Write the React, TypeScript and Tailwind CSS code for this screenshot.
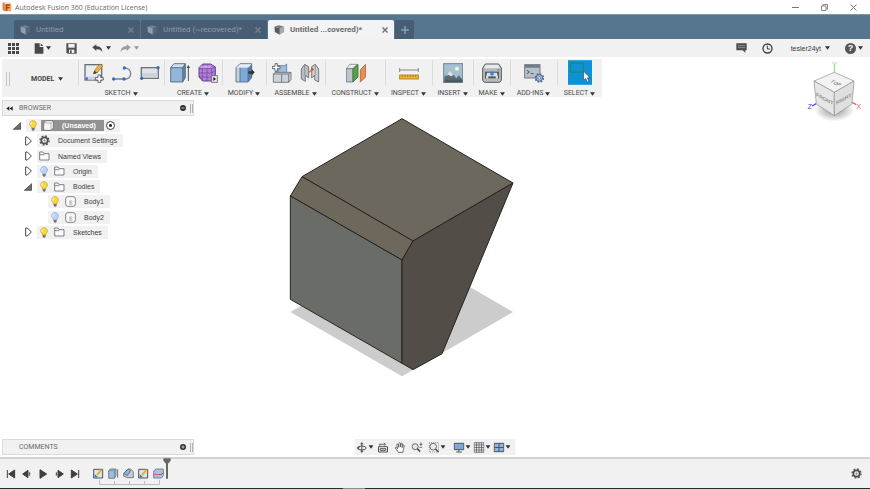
import { useState } from 'react';
import type { ReactNode } from 'react';
import clsx from 'clsx';

type IconProps = { className?: string };

const Caret = ({ className = 'text-[#333333]' }: IconProps) => (
  <svg viewBox="0 0 5 4" className={clsx('h-1 w-[5px] shrink-0', className)} aria-hidden="true">
    <path d="M0 0.2h5L2.500 3.800z" fill="currentColor" />
  </svg>
);

/* ---------- logos and tab icons ---------- */

const Logo = () => (
  <svg viewBox="0 0 30 30" className="size-[10px] shrink-0" aria-hidden="true">
    <path d="M2 2h20l6 5v21H8l-6-5z" fill="#f3a766" />
    <path d="M2 2h6v26l-6-5z" fill="#d98546" />
    <path d="M8 2h20v4H8z" fill="#fbd9b8" />
    <path d="M11 7h13v4h-8v4h7v4h-7v7h-5z" fill="#9c4a18" />
  </svg>
);

const CubeIcon = ({ dim }: { dim?: boolean }) => (
  <svg viewBox="0 0 32 30" className={clsx('h-[10px] w-[11px] shrink-0', dim && 'opacity-60')} aria-hidden="true">
    <path d="M1 5 14 1l16 4-13 5z" fill={dim ? '#8b98a4' : '#777777'} />
    <path d="M1 5l16 5v19L2 21z" fill={dim ? '#c3ccd4' : '#5a5a5a'} />
    <path d="M17 10 30 5v16l-13 8z" fill={dim ? '#5f6f7f' : '#a9a9a9'} />
  </svg>
);

/* ---------- quick access icons ---------- */

const GridIcon = () => (
  <svg viewBox="0 0 33 33" className="size-[11px]" fill="#484848" aria-hidden="true">
    {[0, 12, 24].map((y) => [0, 12, 24].map((x) => <rect key={`${x}-${y}`} x={x} y={y} width="9" height="9" />))}
  </svg>
);

const FileIcon = () => (
  <svg viewBox="0 0 30 33" className="h-[11px] w-[10px]" fill="#484848" aria-hidden="true">
    <path d="M2 1h15v11h11v20H2z" />
    <path d="M20 1l8 8h-8z" />
  </svg>
);

const SaveIcon = () => (
  <svg viewBox="0 0 33 33" className="size-[11px]" aria-hidden="true">
    <path d="M1 1h31v31H5l-4-4z" fill="#505050" />
    <path d="M7 3h19v11H7z" fill="#f2f2f2" />
    <path d="M9 20h16v10H9z" fill="#f2f2f2" />
    <path d="M12 22h5v8h-5z" fill="#505050" />
  </svg>
);

const UndoIcon = ({ flip }: { flip?: boolean }) => (
  <svg viewBox="0 0 33 27" className="h-[9px] w-[11px]" aria-hidden="true">
    <path
      d={flip ? 'M32 10 20 1v6C9 7 2 13 2 24c4-7 9-9 18-8v5z' : 'M1 10 13 1v6c11 0 18 6 18 17-4-7-9-9-18-8v5z'}
      fill={flip ? '#9a9a9a' : '#484848'}
    />
  </svg>
);

const ChatIcon = () => (
  <svg viewBox="0 0 33 30" className="h-[10px] w-[11px]" aria-hidden="true">
    <path d="M1 1h31v21h-4v7l-8-7H1z" fill="#4c4c4c" />
    <path d="M6 8h21M6 14h21" stroke="#b5b5b5" strokeWidth="2" />
  </svg>
);

const ClockIcon = () => (
  <svg viewBox="0 0 33 33" className="size-[11px]" fill="none" stroke="#3d3d3d" strokeWidth="4" aria-hidden="true">
    <circle cx="16.500" cy="16.500" r="13.500" />
    <path d="M16 8v10h8" strokeWidth="3" />
  </svg>
);

/* ---------- ribbon icons, drawn on a 60 grid ---------- */

const Big = ({ children }: { children: ReactNode }) => (
  <svg viewBox="0 0 60 60" className="size-5 shrink-0" aria-hidden="true">
    {children}
  </svg>
);

const SketchIcon = () => (
  <Big>
    <rect x="3" y="5" width="50" height="46" fill="#e9edf2" stroke="#6a6f76" strokeWidth="4" />
    <path d="M5 40h36v10H5z" fill="#cfd6df" />
    <circle cx="8" cy="47" r="4" fill="#3f6fd0" />
    <path d="M28 33l4-11L48 3l8 6-16 20z" fill="#f0b43c" stroke="#8b6420" strokeWidth="2" />
    <path d="M28 33l4-10 7 6z" fill="#4a3a28" />
    <path d="M42 36h8v8h8v7h-8v8h-8v-8h-8v-7h8z" fill="#fff" stroke="#4a4a4a" strokeWidth="2.500" />
  </Big>
);

const ArcIcon = () => (
  <Big>
    <path d="M4 48h32c12 0 20-6 20-16S48 15 37 15" fill="none" stroke="#7b8084" strokeWidth="4" />
    <g fill="#3468cf">
      <circle cx="5" cy="48" r="5" />
      <circle cx="36" cy="48" r="5" />
      <circle cx="37" cy="15" r="5" />
    </g>
  </Big>
);

const RectIcon = () => (
  <Big>
    <rect x="4" y="14" width="51" height="32" fill="#dfe3e7" stroke="#6e7276" strokeWidth="4" />
    <path d="M6 30h47v14H6z" fill="#cdd2d7" />
    <circle cx="54" cy="14" r="5" fill="#3468cf" />
    <circle cx="5" cy="46" r="5" fill="#3468cf" />
  </Big>
);

const ExtrudeIcon = () => (
  <Big>
    <path d="M2 14 12 2h34l-8 12z" fill="#cfe0ee" />
    <path d="M38 14l8-12v42l-8 13z" fill="#5f86ae" />
    <path d="M2 14h36v43H2z" fill="#91b6d8" />
    <path d="M2 14 12 2h34v42l-8 13H2zM2 14h36v43M38 14l8-12" fill="none" stroke="#4d6075" strokeWidth="2.500" />
    <path d="M55 12v42" stroke="#555" strokeWidth="3" />
    <path d="M55 6l5 9H50z" fill="#444" />
  </Big>
);

const FormIcon = () => (
  <Big>
    <path d="M14 3h24l14 9v28L40 54H14L3 42V14z" fill="#b07fd8" stroke="#67408c" strokeWidth="3" />
    <path d="M3 17h38l11-5M3 30h38l11-7M3 42h38l11-8M16 3l-3 14v37M30 3l-3 14v37M41 17v37" fill="none" stroke="#70449c" strokeWidth="2" />
    <path d="M9 8h30l-4 7H7z" fill="#d3b5ea" opacity=".7" />
    <rect x="41" y="38" width="17" height="20" fill="#eee" stroke="#777" strokeWidth="3" />
    <path d="M46 42l8 6-8 6z" fill="#222" />
  </Big>
);

const PressPullIcon = () => (
  <Big>
    <path d="M3 14 15 2h35L38 14z" fill="#e7edf2" />
    <path d="M3 14h12v43H3z" fill="#c3d3e0" />
    <path d="M15 14h24v43H15z" fill="#7ca9d5" />
    <path d="M39 14 51 3v40L39 57z" fill="#5682b5" />
    <path d="M3 14 15 2h35v42L39 57H3zM15 14v43M39 14v43" fill="none" stroke="#536a82" strokeWidth="2.500" />
    <path d="M40 25h10v-6l9 9-9 10v-6H40z" fill="#333" />
  </Big>
);

const ComponentIcon = () => (
  <Big>
    <path d="M18 8h20l6-5v26H18z" fill="#9dbde0" stroke="#5b7ba1" strokeWidth="2.500" />
    <path d="M4 33l5-5h48v22l-7 8H4z" fill="#ccd2d8" stroke="#666d76" strokeWidth="2.500" />
    <path d="M4 33h46l7-5M29 33v25M50 33v25" fill="none" stroke="#666d76" strokeWidth="2.500" />
    <path d="M9 2h7v8h8v7h-8v8H9v-8H1v-7h8z" fill="#fff" stroke="#4c4c4c" strokeWidth="2.500" />
  </Big>
);

const JointIcon = () => (
  <Big>
    <path d="M4 18 14 4l12 7v34l-10-8v18L4 48z" fill="#b9bec4" stroke="#62676c" strokeWidth="2.500" />
    <path d="M56 18 46 4l-11 7v34l9-8v14l12 6z" fill="#c9cdd1" stroke="#62676c" strokeWidth="2.500" />
    <path d="M14 4v33M46 4v33" stroke="#7c8186" strokeWidth="2" />
    <path d="M25 30 37 19" stroke="#e2762c" strokeWidth="4" />
    <circle cx="37" cy="19" r="4" fill="#d8571c" />
  </Big>
);

const PlaneIcon = () => (
  <Big>
    <path d="M1 17 11 4h22L21 17z" fill="#e9edf0" stroke="#70777d" strokeWidth="2" />
    <path d="M1 17h20v40H1z" fill="#bcc5cc" stroke="#70777d" strokeWidth="2.500" />
    <path d="M21 17 36 4v38L21 57z" fill="#58a04e" stroke="#37742f" strokeWidth="2.500" />
    <path d="M43 20 59 4v38L43 57z" fill="#e58e58" stroke="#b1602f" strokeWidth="2.500" />
  </Big>
);

const MeasureIcon = () => (
  <Big>
    <path d="M2 21h56M2 15v12M58 15v12" stroke="#888" strokeWidth="3" />
    <rect x="2" y="36" width="56" height="12" fill="#f0b52c" stroke="#a67c1c" strokeWidth="2.500" />
    <path d="M10 37v5M18 37v5M26 37v5M34 37v5M42 37v5M50 37v5" stroke="#8a681a" strokeWidth="2" />
  </Big>
);

const ImageIcon = () => (
  <Big>
    <rect x="2" y="2" width="57" height="57" fill="#a5c0d6" stroke="#78828a" strokeWidth="3" />
    <circle cx="42" cy="17" r="6" fill="#fdf3bb" />
    <path d="M4 42 21 22l19 24 7-9 11 12v9H4z" fill="#5d6c79" />
    <path d="M21 22l11 14-9 4-7-5-8 4z" fill="#dbe3e8" />
    <path d="M4 50h54v8H4z" fill="#4b5966" />
  </Big>
);

const PrintIcon = () => (
  <Big>
    <path d="M10 3h40l8 12v37l-5 6H7l-5-6V15z" fill="#b6babd" stroke="#55595d" strokeWidth="3" />
    <path d="M11 5h38l5 11H6z" fill="#e8eaeb" />
    <circle cx="49" cy="20" r="3" fill="#3fae3a" />
    <rect x="9" y="26" width="42" height="22" fill="#50555a" />
    <path d="M15 29h30l4 18H11z" fill="#dcdfe1" />
    <path d="M19 40h22v6H19z" fill="#50555a" />
    <path d="M25 26h10v8l-5 5-5-5z" fill="#3b82d4" />
  </Big>
);

const ScriptIcon = () => (
  <Big>
    <rect x="2" y="5" width="46" height="40" fill="#b7c0ca" stroke="#727a83" strokeWidth="3" />
    <path d="M3 6h44v8H3z" fill="#707a86" />
    <path d="M9 22l7 5-7 5M20 32h9" fill="none" stroke="#4e5660" strokeWidth="3" />
    <circle cx="46" cy="45" r="10" fill="#a8bedb" stroke="#4b6b94" strokeWidth="3" />
    <circle cx="46" cy="45" r="12" fill="none" stroke="#4b6b94" strokeWidth="5" strokeDasharray="5 4.400" />
    <circle cx="46" cy="45" r="4" fill="#f0f0f0" stroke="#4b6b94" strokeWidth="2" />
  </Big>
);

const SelectIcon = () => (
  <svg viewBox="0 0 72 74" className="h-[25px] w-6 shrink-0" aria-hidden="true">
    <rect width="72" height="74" fill="#0d92d8" />
    <rect x="8" y="9" width="38" height="27" fill="none" stroke="#1e8a4c" strokeWidth="3" />
    <path d="M47 33v27l6-5 5 11 5-3-5-10h8z" fill="#fff" stroke="#3a4752" strokeWidth="2" />
  </svg>
);

const ribbon = [
  { label: 'SKETCH', width: 'w-[86px]', icons: [SketchIcon, ArcIcon, RectIcon] },
  { label: 'CREATE', width: 'w-[58px]', icons: [ExtrudeIcon, FormIcon] },
  { label: 'MODIFY', width: 'w-11', icons: [PressPullIcon] },
  { label: 'ASSEMBLE', width: 'w-[59px]', icons: [ComponentIcon, JointIcon] },
  { label: 'CONSTRUCT', width: 'w-[60px]', icons: [PlaneIcon] },
  { label: 'INSPECT', width: 'w-[47px]', icons: [MeasureIcon] },
  { label: 'INSERT', width: 'w-[41px]', icons: [ImageIcon] },
  { label: 'MAKE', width: 'w-[37px]', icons: [PrintIcon] },
  { label: 'ADD-INS', width: 'w-[47px]', icons: [ScriptIcon] },
  { label: 'SELECT', width: 'w-[45px]', icons: [SelectIcon] },
];

/* ---------- browser tree icons ---------- */

const Bulb = ({ on }: { on: boolean }) => (
  <svg viewBox="0 0 30 33" className="h-[11px] w-[10px] shrink-0" aria-hidden="true">
    <path
      d="M15 2c6 0 10 4 10 10 0 5-5 7-5 12h-9c0-5-6-7-6-12C5 6 9 2 15 2z"
      fill={on ? '#f8d93c' : '#bcd3f3'}
      stroke={on ? '#c39a1d' : '#7f9cc6'}
      strokeWidth="2"
    />
    <path d="M11 6c-3 2-3 5-2 8" fill="none" stroke="#fff" strokeWidth="3" />
    <path d="M11 24h9v5l-3 3h-3l-3-3z" fill="#777" />
  </svg>
);

const Folder = () => (
  <svg viewBox="0 0 33 30" className="h-[10px] w-[11px] shrink-0" fill="#fafafa" stroke="#666b70" strokeWidth="2.500" aria-hidden="true">
    <path d="M2 3h10l3 5h15v19H2z" />
    <path d="M2 11h12l3-3" fill="none" />
  </svg>
);

const Gear = ({ className }: IconProps) => (
  <svg viewBox="0 0 33 33" className={clsx('shrink-0', className)} fill="none" stroke="#505050" aria-hidden="true">
    <circle cx="16.500" cy="16.500" r="9.500" strokeWidth="5" />
    <circle cx="16.500" cy="16.500" r="13.500" strokeWidth="4" strokeDasharray="5.300 5.300" />
    <circle cx="16.500" cy="16.500" r="2" strokeWidth="2" />
  </svg>
);

const BodyIcon = () => (
  <svg viewBox="0 0 33 33" className="size-[11px] shrink-0" aria-hidden="true">
    <rect x="2" y="2" width="29" height="29" rx="7" fill="#fbfbfb" stroke="#6a6f76" strokeWidth="2.500" />
    <path d="M12 13h10v14H12z" fill="#c6cdd6" />
  </svg>
);

const PartIcon = () => (
  <svg viewBox="0 0 33 33" className="size-[11px] shrink-0" aria-hidden="true">
    <path d="M2 9l7-7h22v22l-7 7H2z" fill="#f5f5f5" stroke="#5e5e5e" strokeWidth="2" />
    <path d="M2 9h22v22M24 9l7-7" fill="none" stroke="#9a9a9a" strokeWidth="2" />
  </svg>
);

const Arrow = ({ open }: { open: boolean }) => (
  <svg viewBox="0 0 24 30" className="h-[10px] w-2" aria-hidden="true">
    {open ? (
      <path d="M23 5v20H1z" fill="#6f6f6f" stroke="#333" strokeWidth="2" />
    ) : (
      <path d="M5 3h5l12 12-12 12H5z" fill="#fff" stroke="#444" strokeWidth="3" />
    )}
  </svg>
);

type Node = { name: string; pad: string; open?: boolean; bulb?: boolean; icon: () => ReactNode };

const nodes: Node[] = [
  { name: 'Document Settings', pad: 'pl-[22px]', open: false, icon: () => <Gear className="size-[11px]" /> },
  { name: 'Named Views', pad: 'pl-[22px]', open: false, icon: Folder },
  { name: 'Origin', pad: 'pl-[22px]', open: false, bulb: false, icon: Folder },
  { name: 'Bodies', pad: 'pl-[22px]', open: true, bulb: true, icon: Folder },
  { name: 'Body1', pad: 'pl-[46px]', bulb: true, icon: BodyIcon },
  { name: 'Body2', pad: 'pl-[46px]', bulb: false, icon: BodyIcon },
  { name: 'Sketches', pad: 'pl-[22px]', open: false, bulb: true, icon: Folder },
];

function TreeRow({ node }: { node: Node }) {
  const [lit, setLit] = useState(node.bulb);
  const Icon = node.icon;
  return (
    <li className={clsx('flex h-[13px] items-center gap-[5px]', node.pad)}>
      {node.open !== undefined && (
        <button aria-label={`Toggle ${node.name}`}>
          <Arrow open={node.open} />
        </button>
      )}
      <div className="flex h-[13px] items-center bg-[#f1f1f1] pr-[6px] pl-[2px]">
        {lit !== undefined && (
          <button aria-label={`Show or hide ${node.name}`} className="mr-[5px]" onClick={() => setLit(!lit)}>
            <Bulb on={lit} />
          </button>
        )}
        <button className="flex items-center gap-2">
          <Icon />
          {node.name}
        </button>
      </div>
    </li>
  );
}

function PanelHeader({ title, arrows, plus }: { title: string; arrows?: boolean; plus?: boolean }) {
  return (
    <div className="flex h-4 w-48 items-center border border-[#dadada] bg-[#f1f1f1] pl-[3px] font-[Roboto,sans-serif] text-[7px] text-[#6b6b6b]">
      <span className="w-[13px]">
        {arrows && (
          <svg viewBox="0 0 21 15" className="h-[5px] w-[7px]" fill="#222" aria-hidden="true">
            <path d="M10 1v13L1 7.500zM20 1v13l-9-6.500z" />
          </svg>
        )}
      </span>
      <h2>{title}</h2>
      <button aria-label={`${title} options`} className="ml-auto">
        <svg viewBox="0 0 18 18" className="size-[6px]" aria-hidden="true">
          <circle cx="9" cy="9" r="9" fill="#2e2e2e" />
          <path d={plus ? 'M4 9h10M9 4v10' : 'M4 9h10'} stroke="#d8d8d8" strokeWidth="2.500" />
        </svg>
      </button>
      <span className="ml-1 h-[9px] w-[3px] border-x border-[#b3b3b3]" />
    </div>
  );
}

/* ---------- navigation bar icons, drawn on a 33 grid ---------- */

const Small = ({ children }: { children: ReactNode }) => (
  <svg viewBox="0 0 33 33" className="size-[11px] shrink-0" fill="none" stroke="#4f5357" strokeWidth="3" aria-hidden="true">
    {children}
  </svg>
);

const navTools = [
  {
    name: 'Orbit',
    menu: true,
    gap: 'ml-0',
    icon: (
      <Small>
        <ellipse cx="16" cy="18" rx="13" ry="6" />
        <path d="M16 4v26" />
        <path d="M16 0l5 7H11zM16 33l5-7H11zM1 15l9 1-5 7z" fill="#4f5357" stroke="none" />
      </Small>
    ),
  },
  {
    name: 'Look at',
    gap: 'ml-1',
    icon: (
      <Small>
        <path d="M3 14h27v16H3zM8 20h17v5H8z" />
        <path d="M7 14V5M7 7h15M19 3l5 4-5 4" strokeWidth="2.500" />
      </Small>
    ),
  },
  {
    name: 'Pan',
    gap: 'ml-[6px]',
    icon: (
      <Small>
        <path
          d="M12 31C9 26 4 22 2 17c2-2 4 0 7 3L7 8c1-3 4-2 4 0l2 8V4c1-3 4-3 5 0v11l2-10c1-2 4-2 4 1l-1 11 3-7c2-2 4 0 3 2-1 8-3 12-4 19z"
          fill="#fff"
          strokeWidth="2.500"
        />
      </Small>
    ),
  },
  {
    name: 'Zoom',
    gap: 'ml-[6px]',
    icon: (
      <Small>
        <circle cx="11" cy="14" r="9" fill="#dceaf2" strokeWidth="2.500" />
        <path d="M17 20l9 9" strokeWidth="5" />
        <path d="M24 7h9M28.500 2v10M24 16h8" strokeWidth="2.500" />
      </Small>
    ),
  },
  {
    name: 'Fit',
    menu: true,
    gap: 'ml-[6px]',
    icon: (
      <Small>
        <path d="M2 2h28v28H2z" strokeDasharray="3 3" strokeWidth="2" />
        <circle cx="14" cy="14" r="10" fill="#e2eff4" strokeWidth="2.500" />
        <path d="M21 21l9 9" strokeWidth="5" />
      </Small>
    ),
  },
  {
    name: 'Display settings',
    menu: true,
    gap: 'ml-2',
    icon: (
      <Small>
        <path d="M2 4h29v19H2z" fill="#7fa9dc" />
        <path d="M16 23v6M8 30h17" />
      </Small>
    ),
  },
  {
    name: 'Grid and snaps',
    menu: true,
    gap: 'ml-[3px]',
    icon: (
      <Small>
        <path d="M2 2h29v29H2z" fill="#e4e4e4" strokeWidth="2" />
        <path d="M9 2v29M16.500 2v29M24 2v29M2 9h29M2 16.500h29M2 24h29" strokeWidth="2" />
      </Small>
    ),
  },
  {
    name: 'Viewports',
    menu: true,
    gap: 'ml-[3px]',
    icon: (
      <Small>
        <path d="M2 4h29v25H2z" fill="#8db4e2" />
        <path d="M16.500 4v25M2 16.500h29" />
      </Small>
    ),
  },
];

const playback = [
  { name: 'Go to start', d: 'M4 3v24M26 3v24L8 15z' },
  { name: 'Step back', d: 'M18 4v22L2 15zM23 10v10' },
  { name: 'Play', d: 'M6 2l20 13L6 28z' },
  { name: 'Step forward', d: 'M12 4v22l16-11zM7 10v10' },
  { name: 'Go to end', d: 'M26 3v24M4 3v24l18-12z' },
];

const sketchFeature = (
  <Small>
    <path d="M2 4h27v26H2z" fill="#dde5ec" />
    <path d="M12 21 26 5" stroke="#e9b021" strokeWidth="6" />
    <path d="M5 19v9h10z" fill="#2f6dc0" stroke="none" />
  </Small>
);

const features = [
  { name: 'Sketch1', icon: sketchFeature },
  {
    name: 'Extrude1',
    icon: (
      <Small>
        <path d="M2 8l5-5h17v20l-5 8H2z" fill="#9dbfe0" strokeWidth="2" />
        <path d="M2 8h17v22M19 8l5-5" stroke="#5f7d9c" strokeWidth="2" />
        <path d="M29 4v25" strokeWidth="2.500" />
      </Small>
    ),
  },
  {
    name: 'Chamfer1',
    icon: (
      <Small>
        <path d="M2 17 15 3h8l8 8v18H14L2 25z" fill="#c6cfd8" strokeWidth="2" />
        <path d="M2 17 15 3l8 5-10 15z" fill="#8fb4dd" strokeWidth="2" />
      </Small>
    ),
  },
  { name: 'Sketch2', icon: sketchFeature },
  {
    name: 'Split1',
    icon: (
      <Small>
        <path d="M2 9l7-6h22v20l-6 7H2z" fill="#a9c3de" stroke="#60758c" strokeWidth="2.500" />
        <path d="M2 22c8-8 14 4 29-7" stroke="#d84436" />
      </Small>
    ),
  },
];

function Model() {
  return (
    <svg viewBox="0 0 735 825" className="absolute top-[53px] left-[280px] h-[275px] w-[245px]" role="img" aria-label="Solid body">
      <path d="M366 413 699 606 366 799 31 606z" fill="#cccccc" />
      <g stroke="#25231f" strokeWidth="3" strokeLinejoin="round">
        <path d="M366 26 699 219 399 393 66 200z" fill="#6c685e" />
        <path d="M66 200 399 393 366 450 31 258z" fill="#6d675c" />
        <path d="M31 258 366 450v310L31 568z" fill="#6a6c67" />
        <path d="M399 393 699 219 486 731l-87 48-33-19V450z" fill="#524e47" />
      </g>
    </svg>
  );
}

function ViewCube() {
  return (
    <svg viewBox="318 180 168 189" className="absolute top-[3px] right-2 h-[63px] w-14 font-['Liberation_Sans',sans-serif]" role="img" aria-label="View cube">
      <defs>
        <radialGradient id="floor">
          <stop offset="0.3" stopColor="#b0b0b0" />
          <stop offset="1" stopColor="#b0b0b0" stopOpacity="0" />
        </radialGradient>
      </defs>
      <ellipse cx="403" cy="330" rx="60" ry="34" fill="url(#floor)" />
      <path d="M403 217v-20" stroke="#72e672" strokeWidth="3" />
      <path d="M349 311l-13 7" stroke="#4a4aee" strokeWidth="4" />
      <path d="M456 307l13 7" stroke="#f06060" strokeWidth="4" />
      <g stroke="#8d8d8d" strokeWidth="2" strokeLinejoin="round">
        <path d="M403 217 462 243 403 277 342 243z" fill="#f3f3f3" />
        <path d="M342 243 403 277v70l-54-35z" fill="#e6e6e6" />
        <path d="M403 277 462 243l-6 69-53 35z" fill="#dfdfdf" />
      </g>
      <g fill="#8e8e8e" fontSize="15" fontWeight="bold" textAnchor="middle">
        <text transform="translate(403 253) rotate(26) skewX(-25)">TOP</text>
        <text transform="translate(374 302) skewY(28)">FRONT</text>
        <text transform="translate(431 302) skewY(-28)">RIGHT</text>
      </g>
      <g fontSize="22" textAnchor="middle">
        <text x="403" y="202" fill="#72e672">Y</text>
        <text x="329" y="328" fill="#4a4aee">Z</text>
        <text x="476" y="327" fill="#f06060">X</text>
      </g>
    </svg>
  );
}

const tabs = ['Untitled', 'Untitled (~recovered)*', 'Untitled ...covered)*'];

export default function App() {
  const [active, setActive] = useState(2);

  return (
    <div className="flex h-screen flex-col overflow-hidden bg-white font-['Liberation_Sans',sans-serif] text-[7px] leading-none text-[#3c3c3c]">
      {/* Title bar */}
      <header className="flex h-[14px] shrink-0 items-center gap-[3px] pr-[13px] pl-[2px]">
        <Logo />
        <h1 className="font-['Open_Sans',sans-serif] text-[7px] text-[#6a6a6a]">Autodesk Fusion 360 (Education License)</h1>
        <div className="ml-auto flex gap-[22px]">
          <button aria-label="Minimize">
            <svg viewBox="0 0 7 7" className="size-[7px]" stroke="#777" fill="none"><path d="M0 3.500h7" /></svg>
          </button>
          <button aria-label="Restore">
            <svg viewBox="0 0 7 7" className="size-[7px]" stroke="#888" fill="none"><path d="M.5 2h4.500v4.500H.5zM2 2V.5h4.500V5H5" /></svg>
          </button>
          <button aria-label="Close">
            <svg viewBox="0 0 7 7" className="size-[7px]" stroke="#777" fill="none"><path d="M.5.5l6 6M6.500.5l-6 6" /></svg>
          </button>
        </div>
      </header>

      {/* Document tabs */}
      <div className="flex h-[25px] shrink-0 items-end gap-px border-t border-[#7f97aa] bg-[#56758f] pl-[14px]" role="tablist">
        {tabs.map((name, i) => (
          <div
            key={name}
            className={clsx(
              'flex h-[19px] w-[126px] items-center rounded-t-xs pr-[6px] pl-[6px]',
              i === active ? 'bg-[#f3f3f5] font-bold text-[#6b6b6b]' : 'bg-[#475d74] text-[#8d9cab]'
            )}
          >
            <button
              role="tab"
              aria-selected={i === active}
              onClick={() => setActive(i)}
              className="flex grow items-center gap-[5px] font-[Roboto,sans-serif] text-[8px]"
            >
              <CubeIcon dim={i !== active} />
              {name}
            </button>
            <button aria-label={`Close ${name}`}>
              <svg viewBox="0 0 6 6" className="size-[6px]" stroke={i === active ? '#777777' : '#74808d'} strokeWidth="1.500">
                <path d="M.5.5l5 5M5.500.5l-5 5" />
              </svg>
            </button>
          </div>
        ))}
        <button aria-label="New tab" className="flex h-[19px] w-[19px] items-center justify-center rounded-t-xs bg-[#475d74]">
          <svg viewBox="0 0 8 8" className="size-2" stroke="#8f9dab" strokeWidth="1.500"><path d="M4 0v8M0 4h8" /></svg>
        </button>
      </div>

      {/* Quick access bar */}
      <div className="flex h-[18px] shrink-0 items-center bg-[#f1f1f1] pr-[7px] pl-2">
        <button aria-label="Data panel"><GridIcon /></button>
        <button aria-label="File" className="ml-[15px] flex items-center gap-[2px]"><FileIcon /><Caret /></button>
        <button aria-label="Save" className="ml-[15px]"><SaveIcon /></button>
        <button aria-label="Undo" className="ml-[15px] flex items-center gap-[3px]"><UndoIcon /><Caret /></button>
        <button aria-label="Redo" className="ml-[9px] flex items-center gap-[3px]"><UndoIcon flip /><Caret className="text-[#999999]" /></button>
        <button aria-label="Comments" className="ml-auto"><ChatIcon /></button>
        <button aria-label="Job status" className="ml-[15px]"><ClockIcon /></button>
        <button className="ml-[18px] flex items-center gap-1">tesler24yt<Caret /></button>
        <button aria-label="Help" className="ml-[15px] flex items-center gap-[2px]">
          <span className="flex size-[11px] items-center justify-center rounded-full bg-[#555555] text-[9px] font-bold text-white">?</span>
          <Caret />
        </button>
      </div>

      <main className="relative grow">
        <Model />
        <ViewCube />

        <div className="absolute top-[2px] left-[2px] flex flex-col gap-[3px]">
          {/* Ribbon */}
          <nav className="flex h-[38px] bg-[#f1f1f1] font-[Roboto,sans-serif]">
            <div className="flex w-[76px] items-center pt-[2px] pl-1">
              <span className="h-[14px] w-1 border-x border-[#c4c4c4]" />
              <button className="ml-[21px] flex items-center gap-1 font-bold text-[#444444]">
                MODEL
                <Caret />
              </button>
            </div>
            {ribbon.map(({ label, width, icons }) => (
              <div key={label} className={clsx('flex shrink-0 flex-col items-center justify-between pt-px', width)}>
                <div className="flex h-[25px] w-full items-center justify-center gap-2 border-l border-[#dcdcdc]">
                  {icons.map((Icon, i) => (
                    <button key={i} aria-label={`${label} tool ${i + 1}`}>
                      <Icon />
                    </button>
                  ))}
                </div>
                <button className="flex items-center gap-[2px] text-[#4a4a4a]">
                  {label}
                  <Caret />
                </button>
              </div>
            ))}
          </nav>

          {/* Browser */}
          <aside className="flex flex-col gap-[3px]">
            <PanelHeader title="BROWSER" arrows />
            <ul className="flex h-[120px] flex-col justify-between">
              <li className="flex h-[13px] items-center gap-[5px] pl-[11px]">
                <button aria-label="Toggle root"><Arrow open /></button>
                <div className="flex h-[13px] items-center bg-[#f1f1f1] pr-[5px] pl-[2px]">
                  <Bulb on />
                  <button className="ml-[3px] flex h-[11px] items-center gap-2 bg-[#929292] pr-2 pl-[2px] font-bold text-white">
                    <PartIcon />
                    (Unsaved)
                  </button>
                  <input
                    type="radio"
                    defaultChecked
                    aria-label="Activate component"
                    className="ml-[2px] size-[9px] appearance-none rounded-full border border-[#444444] bg-[radial-gradient(circle,#333333_25%,#ffffff_35%)]"
                  />
                </div>
              </li>
              {nodes.map((node) => (
                <TreeRow key={node.name} node={node} />
              ))}
            </ul>
          </aside>
        </div>

        <div className="absolute bottom-[2px] left-[2px]">
          <PanelHeader title="COMMENTS" plus />
        </div>

        {/* Navigation bar */}
        <div className="absolute bottom-[2px] left-1/2 flex h-4 w-[161px] -translate-x-1/2 items-center bg-[#f1f1f1] px-[2px]">
          {navTools.map(({ name, menu, gap, icon }) => (
            <button key={name} aria-label={name} className={clsx('flex items-center gap-px', gap)}>
              {icon}
              {menu && <Caret />}
            </button>
          ))}
        </div>
      </main>

      {/* Timeline */}
      <footer className="relative flex h-8 shrink-0 items-center border-t-2 border-b border-t-[#d2d2d2] border-b-[#2b2b2b] bg-[#f1f1f1] pr-2 pl-[6px]">
        <div className="flex gap-[6px]">
          {playback.map(({ name, d }) => (
            <button key={name} aria-label={name}>
              <svg viewBox="0 0 30 30" className="size-[10px]" fill="#3f3f3f" stroke="#3f3f3f" strokeWidth="3">
                <path d={d} />
              </svg>
            </button>
          ))}
        </div>
        <div className="relative ml-[13px] flex gap-1">
          {features.map(({ name, icon }) => (
            <button key={name} aria-label={name}>{icon}</button>
          ))}
          <svg viewBox="0 0 66 5" className="absolute top-3 left-[6px] h-[5px] w-[66px]" fill="none" stroke="#bdbdbd" aria-hidden="true">
            <path d="M.5 0v4.500h60V0M15.500 1v3M30.500 1v3M45.500 1v3" />
          </svg>
          <svg viewBox="0 0 24 63" className="absolute -top-[10px] left-[70px] h-[21px] w-2" fill="#666666" aria-hidden="true">
            <path d="M1 1h22v7l-8 9v45h-6V17L1 8z" />
          </svg>
        </div>
        <button aria-label="Timeline settings" className="ml-auto">
          <Gear className="size-[11px]" />
        </button>
        <span className="absolute -bottom-px left-[343px] h-px w-[22px] bg-[#8f8f8f]" />
      </footer>
    </div>
  );
}
